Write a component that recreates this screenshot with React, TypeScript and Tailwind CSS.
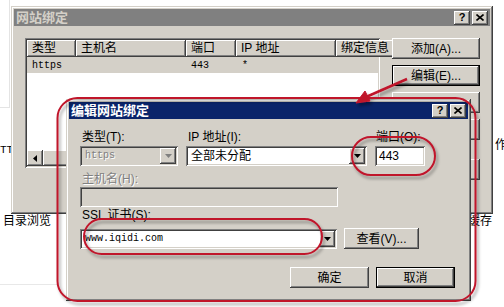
import React from 'react';

const ui = "font-['Liberation_Sans','Noto_Sans_CJK_SC',sans-serif]";
const mono = "font-['Liberation_Mono','Noto_Sans_CJK_SC',monospace]";

// classic 3D bevels
const raised =
  'shadow-[inset_-1px_-1px_0_#404040,inset_1px_1px_0_#ffffff,inset_-2px_-2px_0_#808080,inset_2px_2px_0_#d4d0c8]';
const sunken =
  'shadow-[inset_1px_1px_0_#808080,inset_-1px_-1px_0_#ffffff,inset_2px_2px_0_#404040,inset_-2px_-2px_0_#d4d0c8]';
const frame =
  'shadow-[inset_-1px_-1px_0_#404040,inset_1px_1px_0_#d4d0c8,inset_-2px_-2px_0_#808080,inset_2px_2px_0_#ffffff]';

const TitleButtons = () => (
  <div className="flex gap-[2px]">
    <div className={`flex h-[14px] w-[16px] items-center justify-center bg-[#d4d0c8] ${raised}`}>
      <span className="text-[11px] font-bold leading-none text-black font-['Liberation_Sans',sans-serif]">?</span>
    </div>
    <div className={`flex h-[14px] w-[16px] items-center justify-center bg-[#d4d0c8] ${raised}`}>
      <svg width="8" height="7" viewBox="0 0 8 7">
        <path d="M0.5 0.5L7.5 6.5M7.5 0.5L0.5 6.5" stroke="#000" strokeWidth="1.6" />
      </svg>
    </div>
  </div>
);

const Arrow = ({ color = '#000' }: { color?: string }) => (
  <svg width="7" height="4" viewBox="0 0 7 4">
    <path d="M0 0h7L3.5 4z" fill={color} />
  </svg>
);

const Button = ({
  children,
  className = '',
  def = false,
}: {
  children?: React.ReactNode;
  className?: string;
  def?: boolean;
}) => (
  <div
    className={`flex h-[21px] items-center justify-center bg-[#d4d0c8] text-[12px] leading-none text-black ${raised} ${
      def ? 'border border-black' : ''
    } ${className}`}
  >
    {children}
  </div>
);

const Combo = ({
  text,
  className = '',
  disabled = false,
  textClass = '',
}: {
  text: string;
  className?: string;
  disabled?: boolean;
  textClass?: string;
}) => (
  <div
    className={`flex h-[20px] items-center p-[2px] ${sunken} ${disabled ? 'bg-[#d4d0c8]' : 'bg-white'} ${className}`}
  >
    <span
      className={`flex-1 pl-[3px] leading-none ${textClass} ${
        disabled ? 'text-[#808080] [text-shadow:1px_1px_0_#ffffff]' : 'text-black'
      }`}
    >
      {text}
    </span>
    <div className={`flex h-[16px] w-[16px] items-center justify-center bg-[#d4d0c8] ${raised}`}>
      <Arrow color={disabled ? '#808080' : '#000'} />
    </div>
  </div>
);

const Label = ({ children, className = '', disabled = false }: { children: React.ReactNode; className?: string; disabled?: boolean }) => (
  <div
    className={`h-[14px] pl-[2px] text-[12px] leading-[14px] ${
      disabled ? 'text-[#808080] [text-shadow:1px_1px_0_#ffffff]' : 'text-black'
    } ${className}`}
  >
    {children}
  </div>
);

const HeaderCell = ({ children, className = '' }: { children?: React.ReactNode; className?: string }) => (
  <div className={`h-[17px] shrink-0 overflow-hidden whitespace-nowrap bg-[#d4d0c8] pl-[5px] text-[12px] leading-[17px] ${raised} ${className}`}>
    {children}
  </div>
);

export default function App() {
  return (
    <div className={`relative h-[307px] w-[504px] overflow-hidden bg-white ${ui}`}>
      {/* page behind the dialogs */}
      <div className="absolute left-0 top-0 h-[108px] w-[10px] border-b border-r border-[#e4e4e4]" />
      <div className="absolute left-0 top-[284px] h-0 w-[58px] border-t border-[#e8e8e8]" />
      <div className={`absolute left-0 top-[143px] text-[11px] leading-[14px] text-black ${mono}`}>TT</div>
      <div className="absolute left-[3px] top-[214px] text-[12px] leading-[15px] text-black">目录浏览</div>
      <div className="absolute left-[468px] top-[214px] text-[12px] leading-[15px] text-black">缓存</div>
      <div className="absolute left-[495px] top-[138px] w-[9px] overflow-hidden text-[12px] leading-[15px] text-black">作</div>

      {/* outer dialog: 网站绑定 */}
      <div className={`absolute left-[11px] top-[6px] h-[208px] w-[482px] bg-[#d4d0c8] p-[3px] ${frame}`}>
        <div className="flex h-[17px] items-center bg-[#808080] pl-[2px] pr-[2px]">
          <span className="flex-1 text-[13px] font-bold leading-none text-[#d4d0c8]">网站绑定</span>
          <TitleButtons />
        </div>
        <div className="flex gap-[12px] pl-[11px] pt-[12px]">
          <div className={`flex h-[130px] w-[355px] flex-col bg-white p-[2px] ${sunken}`}>
            <div className="flex">
              <HeaderCell className="w-[49px]">类型</HeaderCell>
              <HeaderCell className="w-[110px]">主机名</HeaderCell>
              <HeaderCell className="w-[50px]">端口</HeaderCell>
              <HeaderCell className="w-[100px]">IP 地址</HeaderCell>
              <HeaderCell className="w-[60px]">绑定信息</HeaderCell>
            </div>
            <div className={`flex h-[16px] items-center bg-[#d4d0c8] text-[10px] text-black ${mono}`}>
              <div className="w-[49px] pl-[5px]">https</div>
              <div className="w-[110px]" />
              <div className="w-[50px] pl-[5px]">443</div>
              <div className="w-[100px] pl-[6px]">*</div>
            </div>
            <div className="mt-auto flex h-[16px] bg-[#ece9e4]">
              <div className={`flex h-[16px] w-[16px] items-center justify-center bg-[#d4d0c8] ${raised}`}>
                <svg width="4" height="7" viewBox="0 0 4 7">
                  <path d="M4 0v7L0 3.5z" fill="#000" />
                </svg>
              </div>
              <div className={`h-[16px] w-[200px] bg-[#d4d0c8] ${raised}`} />
            </div>
          </div>
          <div className="flex w-[88px] flex-col gap-[6px]">
            <Button>添加(A)...</Button>
            <Button def>编辑(E)...</Button>
            {/* buttons hidden behind the front dialog */}
            <Button />
            <Button />
            <Button className="mt-[13px]" />
          </div>
        </div>
      </div>

      {/* inner dialog: 编辑网站绑定 */}
      <div className={`absolute left-[66px] top-[99px] h-[202px] w-[405px] bg-[#d4d0c8] p-[3px] ${frame}`}>
        <div className="flex h-[17px] items-center bg-[#0a246a] pl-[2px] pr-[2px]">
          <span className="flex-1 text-[13px] font-bold leading-none text-white">编辑网站绑定</span>
          <TitleButtons />
        </div>
        <div className="pl-[11px] pt-[11px] pr-[13px]">
          <div className="flex">
            <Label className="w-[106px]">类型(T):</Label>
            <Label className="w-[188px]">IP 地址(I):</Label>
            <Label>端口(O):</Label>
          </div>
          <div className="mt-[2px] flex gap-[8px]">
            <Combo text="https" disabled className="w-[98px]" textClass={`text-[10px] ${mono}`} />
            <Combo text="全部未分配" className="w-[181px]" textClass="text-[12px]" />
            <div className={`flex h-[20px] w-[50px] items-center bg-white pl-[4px] text-[12px] ${sunken}`}>443</div>
          </div>
          <Label disabled className="mt-[6px]">主机名(H):</Label>
          <div className={`mt-[1px] h-[20px] w-[258px] bg-[#d4d0c8] ${sunken}`} />
          <Label className="mt-[1px]">SSL 证书(S):</Label>
          <div className="mt-[6px] flex items-center gap-[7px]">
            <Combo text="www.iqidi.com" className="w-[257px]" textClass={`text-[10px] ${mono}`} />
            <Button className="w-[75px]">查看(V)...</Button>
          </div>
          <div className="mt-[18px] flex justify-end gap-[7px]">
            <Button className="w-[79px]">确定</Button>
            <Button def className="w-[79px]">取消</Button>
          </div>
        </div>
      </div>

      {/* red annotations */}
      <svg className="pointer-events-none absolute left-0 top-0" width="504" height="307" viewBox="0 0 504 307">
        <defs>
          <filter id="sh" x="-10%" y="-10%" width="130%" height="140%">
            <feDropShadow dx="2" dy="3" stdDeviation="1.5" floodColor="#000" floodOpacity="0.35" />
          </filter>
        </defs>
        <g filter="url(#sh)" stroke="#c0142c" strokeWidth="2" fill="none">
          <rect x="57.5" y="98" width="418" height="203" rx="20" />
          <rect x="352" y="137" width="83" height="38" rx="19" />
          <rect x="84" y="219" width="238" height="35" rx="17.5" />
          <line x1="407" y1="79" x2="366" y2="97" strokeWidth="2.5" />
          <polygon points="356,103 370,101 365,91" fill="#c0142c" strokeWidth="1" />
        </g>
      </svg>
    </div>
  );
}
